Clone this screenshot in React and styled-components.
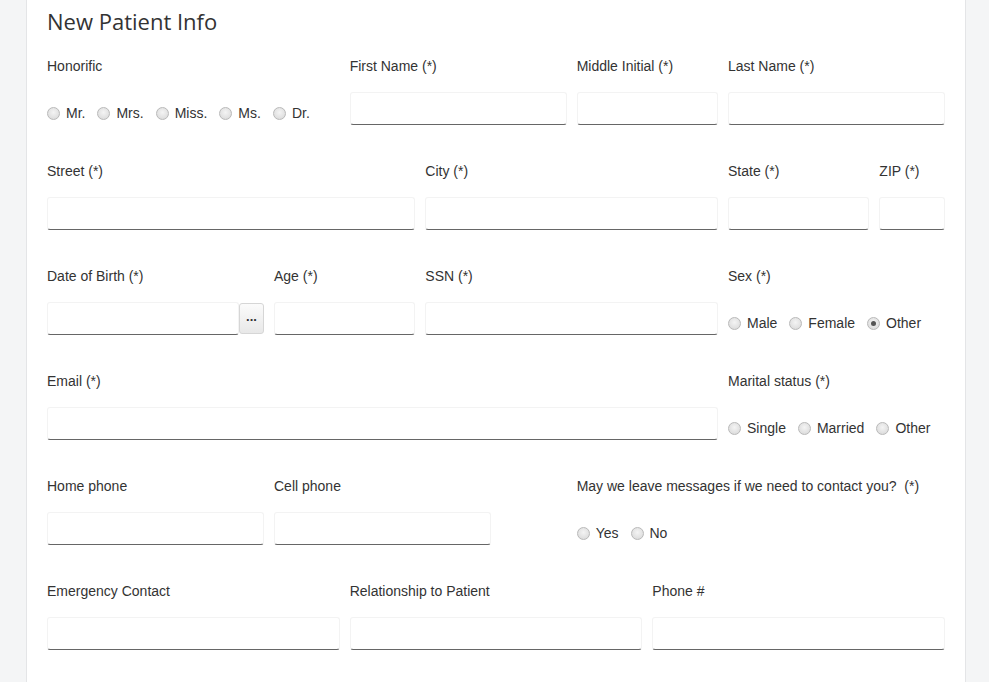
import React from "react";
import styled, { createGlobalStyle } from "styled-components";

const GlobalStyle = createGlobalStyle`
  html, body {
    margin: 0;
    padding: 0;
    background: #f4f5f6;
  }
  body {
    font-family: "Liberation Sans", Arial, sans-serif;
    color: #333;
  }
`;

const Page = styled.div`
  display: flex;
  justify-content: flex-start;
  padding-left: 26px;
  min-height: 682px;
`;

const Card = styled.div`
  width: 940px;
  background: #fff;
  border-left: 1px solid #e4e5e7;
  border-right: 1px solid #e4e5e7;
  padding: 5px 20px 30px 20px;
  min-height: 682px;
  box-sizing: border-box;
`;

const Title = styled.h1`
  font-family: "Open Sans", "Liberation Sans", sans-serif;
  font-size: 22px;
  font-weight: 500;
  color: #333;
  margin: 0 0 19px 0;
  line-height: 32px;
`;

const Row = styled.div`
  display: grid;
  grid-template-columns: repeat(12, 1fr);
  column-gap: 10px;
  margin-bottom: 36px;
`;

const Field = styled.div`
  grid-column: ${(p) => (p.$start ? `${p.$start} / span ${p.$span}` : `span ${p.$span}`)};
  display: flex;
  flex-direction: column;
  min-width: 0;
`;

const Label = styled.label`
  font-size: 14px;
  line-height: 20px;
  color: #333;
  margin-bottom: 16px;
  white-space: nowrap;
`;

const Input = styled.input`
  display: block;
  width: 100%;
  min-width: 0;
  height: 33px;
  box-sizing: border-box;
  border: 1px solid #f3f3f3;
  border-bottom: 1px solid #666;
  border-radius: 3px;
  background: #fff;
  padding: 0 6px;
  font-size: 14px;
  outline: none;
`;

const InputWrap = styled.div`
  display: flex;
  align-items: flex-start;

  & > ${Input} {
    flex: 1;
    width: auto;
  }
`;

const DotsButton = styled.button`
  width: 25px;
  height: 31px;
  margin-top: 1px;
  box-sizing: border-box;
  border: 1px solid #d6d6d6;
  border-radius: 3px;
  background: linear-gradient(#fbfbfb, #e8e8e8);
  font-size: 13px;
  font-weight: 700;
  line-height: 1;
  color: #333;
  padding: 0 0 5px 0;
  font-family: "Liberation Sans", Arial, sans-serif;
`;

const RadioRow = styled.div`
  display: flex;
  align-items: center;
  height: 20px;
  margin-top: 11px;
  gap: 12px;
`;

const RadioOption = styled.label`
  display: flex;
  align-items: center;
  gap: 6px;
  font-size: 14px;
  color: #333;
  white-space: nowrap;
`;

const Circle = styled.span`
  width: 11px;
  height: 11px;
  border-radius: 50%;
  border: 1px solid #b9b9b9;
  background: radial-gradient(circle at 50% 40%, #f4f4f4, #d6d6d6);
  display: flex;
  align-items: center;
  justify-content: center;
  flex-shrink: 0;

  &::after {
    content: "";
    width: 5px;
    height: 5px;
    border-radius: 50%;
    background: ${(p) => (p.$checked ? "#555" : "transparent")};
  }
`;

const Radios = ({ options, checked }) => (
  <RadioRow>
    {options.map((o) => (
      <RadioOption key={o}>
        <Circle $checked={o === checked} />
        {o}
      </RadioOption>
    ))}
  </RadioRow>
);

const TextField = ({ label, span, start }) => (
  <Field $span={span} $start={start}>
    <Label>{label}</Label>
    <Input />
  </Field>
);

export default function App() {
  return (
    <>
      <GlobalStyle />
      <Page>
        <Card>
          <Title>New Patient Info</Title>

          <Row>
            <Field $span={4}>
              <Label>Honorific</Label>
              <Radios options={["Mr.", "Mrs.", "Miss.", "Ms.", "Dr."]} />
            </Field>
            <TextField label="First Name (*)" span={3} />
            <TextField label="Middle Initial (*)" span={2} />
            <TextField label="Last Name (*)" span={3} />
          </Row>

          <Row>
            <TextField label="Street (*)" span={5} />
            <TextField label="City (*)" span={4} />
            <TextField label="State (*)" span={2} />
            <TextField label="ZIP (*)" span={1} />
          </Row>

          <Row>
            <Field $span={3}>
              <Label>Date of Birth (*)</Label>
              <InputWrap>
                <Input />
                <DotsButton>...</DotsButton>
              </InputWrap>
            </Field>
            <TextField label="Age (*)" span={2} />
            <TextField label="SSN (*)" span={4} />
            <Field $span={3}>
              <Label>Sex (*)</Label>
              <Radios options={["Male", "Female", "Other"]} checked="Other" />
            </Field>
          </Row>

          <Row>
            <TextField label="Email (*)" span={9} />
            <Field $span={3}>
              <Label>Marital status (*)</Label>
              <Radios options={["Single", "Married", "Other"]} />
            </Field>
          </Row>

          <Row>
            <TextField label="Home phone" span={3} />
            <TextField label="Cell phone" span={3} />
            <Field $span={5} $start={8}>
              <Label>May we leave messages if we need to contact you?&nbsp; (*)</Label>
              <Radios options={["Yes", "No"]} />
            </Field>
          </Row>

          <Row>
            <TextField label="Emergency Contact" span={4} />
            <TextField label="Relationship to Patient" span={4} />
            <TextField label="Phone #" span={4} />
          </Row>
        </Card>
      </Page>
    </>
  );
}
